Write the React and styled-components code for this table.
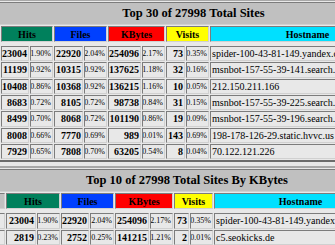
import React from 'react';
import styled, { createGlobalStyle } from 'styled-components';

const GlobalStyle = createGlobalStyle`
  * { box-sizing: border-box; }
  html, body {
    margin: 0;
    padding: 0;
    background: #e8e8e8;
    overflow: hidden;
  }
  body {
    font-family: "Liberation Serif", "Times New Roman", serif;
    color: #000;
  }
`;

// the page is scrolled a little to the right and down
const Page = styled.div`
  display: flex;
  flex-direction: column;
  align-items: flex-start;
  gap: 4px;
  margin: -1px 0 0 -21px;
`;

const Table = styled.div`
  display: grid;
  grid-template-columns: ${(p) => p.$cols.map((w) => `${w}px`).join(' ')};
  gap: 1px;
  padding: 1px;
  margin-left: ${(p) => p.$indent || 0}px;
  border: 2px solid;
  border-color: #a8a8a8 #6c6c6c #6c6c6c #a8a8a8;
`;

const Cell = styled.div`
  display: flex;
  align-items: center;
  min-width: 0;
  overflow: hidden;
  white-space: nowrap;
  padding: 1px;
  height: 15.33px;
  border: 1px solid;
  border-color: #7c7c7c #d0d0d0 #d0d0d0 #7c7c7c;
`;

const Title = styled(Cell)`
  grid-column: 1 / -1;
  justify-content: center;
  height: 23px;
  background: #c0c0c0;
  font-size: 12.5px;
  font-weight: bold;
`;

const Head = styled(Cell)`
  grid-column: span ${(p) => p.$span || 1};
  justify-content: center;
  height: 16px;
  background: ${(p) => p.$bg};
  font-size: 10px;
  font-weight: bold;
`;

const Spacer = styled.div`
  grid-column: 1 / -1;
  height: 2px;
`;

const Rank = styled(Cell)`
  justify-content: center;
  font-size: 10px;
  font-weight: bold;
`;

const Value = styled(Cell)`
  justify-content: flex-end;
  font-size: 10px;
  font-weight: bold;
`;

const Pct = styled(Cell)`
  justify-content: flex-end;
  font-size: 8px;
`;

const Host = styled(Cell)`
  justify-content: flex-start;
  font-size: 10px;
`;

const heads = [
  { label: 'Hits', bg: '#00805c' },
  { label: 'Files', bg: '#0040ff' },
  { label: 'KBytes', bg: '#ff0000' },
  { label: 'Visits', bg: '#ffff00' },
];

const topSites = [
  ['23004', '1.90%', '22920', '2.04%', '254096', '2.17%', '73', '0.35%', 'spider-100-43-81-149.yandex.com'],
  ['11199', '0.92%', '10315', '0.92%', '137625', '1.18%', '32', '0.16%', 'msnbot-157-55-39-141.search.msn.com'],
  ['10408', '0.86%', '10368', '0.92%', '136215', '1.16%', '10', '0.05%', '212.150.211.166'],
  ['8683', '0.72%', '8105', '0.72%', '98738', '0.84%', '31', '0.15%', 'msnbot-157-55-39-225.search.msn.com'],
  ['8499', '0.70%', '8068', '0.72%', '101190', '0.86%', '19', '0.09%', 'msnbot-157-55-39-196.search.msn.com'],
  ['8008', '0.66%', '7770', '0.69%', '989', '0.01%', '143', '0.69%', '198-178-126-29.static.hvvc.us'],
  ['7929', '0.65%', '7808', '0.70%', '63205', '0.54%', '8', '0.04%', '70.122.121.226'],
];

const topByKBytes = [
  ['23004', '1.90%', '22920', '2.04%', '254096', '2.17%', '73', '0.35%', 'spider-100-43-81-149.yandex.com'],
  ['2819', '0.23%', '2752', '0.25%', '141215', '1.21%', '2', '0.01%', 'c5.seokicks.de'],
];

function SitesTable({ title, rows, cols, indent }) {
  return (
    <Table $cols={cols} $indent={indent}>
      <Title>{title}</Title>
      <Head $bg="#c0c0c0">#</Head>
      {heads.map((h) => (
        <Head key={h.label} $bg={h.bg} $span={2}>
          {h.label}
        </Head>
      ))}
      <Head $bg="#00e0ff">Hostname</Head>
      <Spacer />
      {rows.map((r, i) => (
        <React.Fragment key={i}>
          <Rank>{i + 1}</Rank>
          {[0, 2, 4, 6].map((n) => (
            <React.Fragment key={n}>
              <Value>{r[n]}</Value>
              <Pct>{r[n + 1]}</Pct>
            </React.Fragment>
          ))}
          <Host>{r[8]}</Host>
        </React.Fragment>
      ))}
    </Table>
  );
}

export default function App() {
  return (
    <>
      <GlobalStyle />
      <Page>
        <SitesTable
          title="Top 30 of 27998 Total Sites"
          rows={topSites}
          cols={[18, 28, 23, 29, 23, 33, 23, 19, 23, 195]}
        />
        <SitesTable
          title="Top 10 of 27998 Total Sites By KBytes"
          rows={topByKBytes}
          cols={[18, 30, 23, 28, 24, 34, 23, 15, 23, 173]}
          indent={5}
        />
      </Page>
    </>
  );
}
